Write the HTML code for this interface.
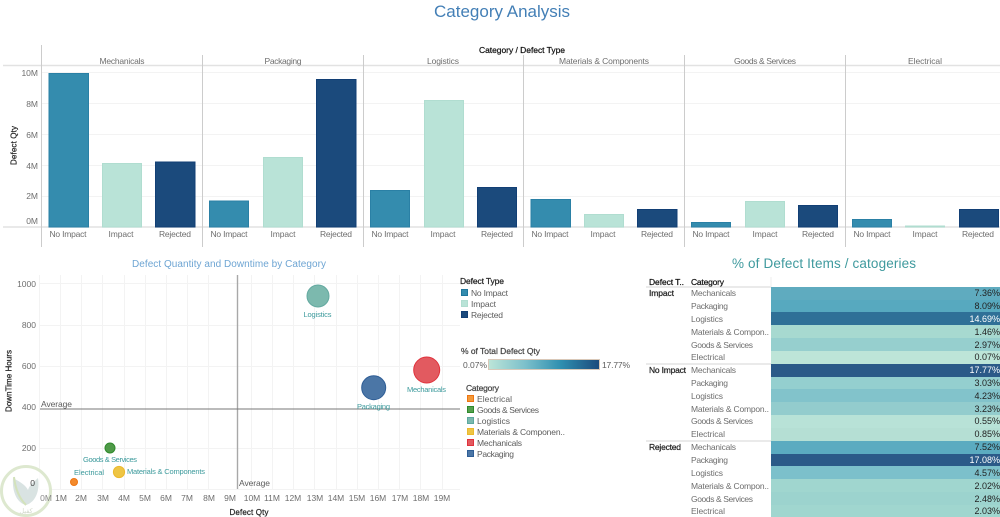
<!DOCTYPE html>
<html><head><meta charset="utf-8"><style>
html,body{margin:0;padding:0;background:#fff;width:1000px;height:517px;overflow:hidden}
svg{display:block;filter:blur(.35px)}
text{font-family:"Liberation Sans",sans-serif;font-size:8.5px;fill:#6e6e6e}
.b{fill:#222;font-weight:normal;stroke:#222;stroke-width:.22px;font-size:8.5px}
.m{text-anchor:middle}
.e{text-anchor:end}
.t{fill:#3c9a9c;font-size:7.5px;text-anchor:middle}
.l{fill:#5c5c5c}
.p{fill:#222;font-size:9px;text-anchor:end}
.g{stroke:#f3f3f3;stroke-width:1;fill:none}
.v{stroke:#ccc;stroke-width:1;fill:none}
</style></head><body>
<svg width="1000" height="517" viewBox="0 0 1000 517" xmlns="http://www.w3.org/2000/svg">
<rect width="1000" height="517" fill="#fff"/>
<text x="502" y="17" class="m" style="font-size:17px;fill:#437fb6" textLength="136">Category Analysis</text>

<!-- top chart grid -->
<path class="g" d="M42 72.5H1000M42 103.5H1000M42 134.5H1000M42 165.5H1000M42 196.5H1000"/>
<path d="M3 65.5H1000M3 227H1000" stroke="#e2e2e2" stroke-width="1.4" fill="none"/>
<path class="v" d="M41.5 45V247M202.5 55V247M363.5 55V247M523.5 55V247M684.5 55V247M845.5 55V247"/>

<text x="522" y="53" class="b m" style="fill:#111;stroke:#111" textLength="86">Category  /  Defect Type</text>
<g class="m">
<text x="122" y="64" class="m" textLength="45">Mechanicals</text>
<text x="283" y="64" class="m" textLength="37">Packaging</text>
<text x="443" y="64" class="m" textLength="32">Logistics</text>
<text x="604" y="64" class="m" textLength="90">Materials &amp; Components</text>
<text x="765" y="64" class="m" textLength="62">Goods &amp; Services</text>
<text x="925" y="64" class="m" textLength="34">Electrical</text>
</g>
<g>
<text x="38" y="76" class="e">10M</text>
<text x="38" y="107" class="e">8M</text>
<text x="38" y="138" class="e">6M</text>
<text x="38" y="169" class="e">4M</text>
<text x="38" y="199" class="e">2M</text>
<text x="38" y="224" class="e">0M</text>
</g>
<text transform="translate(16.5,145.5) rotate(-90)" class="b m" style="font-size:8px" textLength="39">Defect Qty</text>

<!-- bars -->
<g stroke-width="1">
<g fill="#348cae" stroke="#2a80a5">
<rect x="49" y="73.5" width="39.5" height="153.5"/>
<rect x="209.5" y="201" width="39" height="26"/>
<rect x="370.5" y="190.5" width="39" height="36.5"/>
<rect x="531" y="199.5" width="39.5" height="27.5"/>
<rect x="691.5" y="222.5" width="39" height="4.5"/>
<rect x="852.5" y="219.5" width="39" height="7.5"/>
</g>
<g fill="#b9e3d7" stroke="#b0ddd0">
<rect x="102.5" y="163.5" width="39" height="63.5"/>
<rect x="263.5" y="157.5" width="39" height="69.5"/>
<rect x="424.5" y="100.5" width="39" height="126.5"/>
<rect x="584.5" y="214.5" width="39" height="12.5"/>
<rect x="745.5" y="201.5" width="39" height="25.5"/>
<rect x="905.5" y="226" width="39" height="1"/>
</g>
<g fill="#1b4a7c" stroke="#123f75">
<rect x="155.5" y="162" width="39.5" height="65"/>
<rect x="316.5" y="79.5" width="39.5" height="147.5"/>
<rect x="477.5" y="187.5" width="39" height="39.5"/>
<rect x="637.5" y="209.5" width="39.5" height="17.5"/>
<rect x="798.5" y="205.5" width="39" height="21.5"/>
<rect x="959.5" y="209.5" width="39" height="17.5"/>
</g>
</g>
<g>
<text x="68" y="237" class="m" textLength="37">No Impact</text><text x="121" y="237" class="m" textLength="25">Impact</text><text x="175" y="237" class="m" textLength="32">Rejected</text>
<text x="229" y="237" class="m" textLength="37">No Impact</text><text x="283" y="237" class="m" textLength="25">Impact</text><text x="336" y="237" class="m" textLength="32">Rejected</text>
<text x="390" y="237" class="m" textLength="37">No Impact</text><text x="443" y="237" class="m" textLength="25">Impact</text><text x="497" y="237" class="m" textLength="32">Rejected</text>
<text x="550" y="237" class="m" textLength="37">No Impact</text><text x="603" y="237" class="m" textLength="25">Impact</text><text x="657" y="237" class="m" textLength="32">Rejected</text>
<text x="711" y="237" class="m" textLength="37">No Impact</text><text x="765" y="237" class="m" textLength="25">Impact</text><text x="818" y="237" class="m" textLength="32">Rejected</text>
<text x="872" y="237" class="m" textLength="37">No Impact</text><text x="925" y="237" class="m" textLength="25">Impact</text><text x="978" y="237" class="m" textLength="32">Rejected</text>
</g>

<!-- scatter -->
<text x="229" y="267" class="m" style="font-size:10px;fill:#6ea5d3" textLength="194">Defect Quantity and Downtime  by Category</text>
<path class="g" d="M39.5 275V490M60.5 275V490M81.5 275V490M102.5 275V490M124.5 275V490M145.5 275V490M166.5 275V490M187.5 275V490M208.5 275V490M251.5 275V490M272.5 275V490M293.5 275V490M314.5 275V490M336.5 275V490M357.5 275V490M378.5 275V490M399.5 275V490M420.5 275V490M442.5 275V490M40 283.5H460M40 325.5H460M40 366.5H460M40 448.5H460M40 489.5H460"/>
<path d="M237.5 275V489" stroke="#a8a8a8" stroke-width="1.4"/>
<path d="M40 409H460" stroke="#777" stroke-width="1"/>
<text x="41" y="407" class="l" textLength="31">Average</text>
<text x="239" y="486" class="l" textLength="31">Average</text>
<g>
<text x="36" y="287" class="e">1000</text>
<text x="36" y="328" class="e">800</text>
<text x="36" y="369" class="e">600</text>
<text x="36" y="410" class="e">400</text>
<text x="36" y="451" class="e">200</text>
</g>
<g>
<text x="61" y="501" class="m">1M</text><text x="81" y="501" class="m">2M</text><text x="103" y="501" class="m">3M</text><text x="124" y="501" class="m">4M</text><text x="145" y="501" class="m">5M</text><text x="166" y="501" class="m">6M</text><text x="187" y="501" class="m">7M</text><text x="209" y="501" class="m">8M</text><text x="230" y="501" class="m">9M</text><text x="252" y="501" class="m">10M</text><text x="272" y="501" class="m">11M</text><text x="293" y="501" class="m">12M</text><text x="315" y="501" class="m">13M</text><text x="336" y="501" class="m">14M</text><text x="357" y="501" class="m">15M</text><text x="378" y="501" class="m">16M</text><text x="400" y="501" class="m">17M</text><text x="421" y="501" class="m">18M</text><text x="442" y="501" class="m">19M</text>
</g>
<text x="249" y="515" class="b m" style="font-size:8px" textLength="39">Defect Qty</text>
<text transform="translate(11.5,381) rotate(-90)" class="b m" style="font-size:8px" textLength="62">DownTime Hours</text>

<circle cx="318" cy="296" r="11" fill="#7cb9ae" stroke="#63a9a0"/>
<circle cx="373.7" cy="387.7" r="12" fill="#4b76a6" stroke="#2f5e96"/>
<circle cx="426.7" cy="370" r="13" fill="#e25a60" stroke="#e0323c"/>
<circle cx="110" cy="448" r="5" fill="#4f9a48" stroke="#2f8a2c"/>
<circle cx="119" cy="472" r="5.6" fill="#eec544" stroke="#ecb92d"/>
<circle cx="74" cy="482" r="3.5" fill="#f38a2c" stroke="#ee7512"/>
<text x="317.5" y="317" class="t" textLength="28">Logistics</text>
<text x="373.5" y="409" class="t" textLength="33">Packaging</text>
<text x="426.5" y="392" class="t" textLength="39">Mechanicals</text>
<text x="110" y="462" class="t" textLength="54">Goods &amp; Services</text>
<text x="89" y="475" class="t" textLength="30">Electrical</text>
<text x="166" y="474" class="t" textLength="78">Materials &amp; Components</text>

<!-- legends -->
<text x="460" y="284" class="b" textLength="44">Defect Type</text>
<rect x="461.5" y="289.5" width="6" height="6" fill="#348cae" stroke="#1f769c"/><text x="471" y="296" class="l" textLength="37">No Impact</text>
<rect x="461.5" y="300.5" width="6" height="6" fill="#b9e3d7" stroke="#b0ddd0"/><text x="471" y="307" class="l" textLength="25">Impact</text>
<rect x="461.5" y="311.5" width="6" height="6" fill="#1b4a7c" stroke="#123f75"/><text x="471" y="318" class="l" textLength="32">Rejected</text>

<defs><linearGradient id="gr"><stop offset="0" stop-color="#bde5d8"/><stop offset=".33" stop-color="#7cc0cb"/><stop offset=".65" stop-color="#2f8fb0"/><stop offset="1" stop-color="#1b4a7c"/></linearGradient></defs>
<text x="461" y="354" class="b" style="fill:#444;stroke:#444" textLength="79">% of Total Defect Qty</text>
<rect x="488.5" y="359.5" width="111" height="10" fill="url(#gr)" stroke="#d9c8b8"/>
<text x="463" y="368" class="l" textLength="24">0.07%</text>
<text x="602" y="368" class="l" textLength="28">17.77%</text>

<text x="466" y="391" class="b" style="fill:#444;stroke:#444" textLength="33">Category</text>
<rect x="467.5" y="395.5" width="6" height="6" fill="#f39a3a" stroke="#ee7512"/><text x="477" y="402" class="l" textLength="35">Electrical</text>
<rect x="467.5" y="406.5" width="6" height="6" fill="#55a04e" stroke="#2f8a2c"/><text x="477" y="413" class="l" textLength="62">Goods &amp; Services</text>
<rect x="467.5" y="417.5" width="6" height="6" fill="#7cb9ae" stroke="#5ca89f"/><text x="477" y="424" class="l" textLength="33">Logistics</text>
<rect x="467.5" y="428.5" width="6" height="6" fill="#eec544" stroke="#ecb92d"/><text x="477" y="435" class="l" textLength="88">Materials &amp; Componen..</text>
<rect x="467.5" y="439.5" width="6" height="6" fill="#e25a60" stroke="#e0323c"/><text x="477" y="446" class="l" textLength="45">Mechanicals</text>
<rect x="467.5" y="450.5" width="6" height="6" fill="#4b76a6" stroke="#2f5e96"/><text x="477" y="457" class="l" textLength="37">Packaging</text>

<!-- table -->
<text x="824" y="268" class="m" style="font-size:13.5px;fill:#3f9a9e" textLength="184">% of Defect Items / catogeries</text>
<text x="649" y="285" class="b" style="fill:#111;stroke:#111" textLength="35">Defect T..</text>
<text x="691" y="285" class="b" style="fill:#111;stroke:#111" textLength="33">Category</text>
<path d="M646 287H771M646 364H771M646 441H771" stroke="#d4d4d4" stroke-width="1"/>
<path d="M771 277V287" stroke="#eee" stroke-width="1"/>
<text x="649" y="296" class="b" textLength="25">Impact</text>
<text x="649" y="373" class="b" textLength="37">No Impact</text>
<text x="649" y="450" class="b" textLength="32">Rejected</text>

<g>
<rect x="771" y="287" width="229" height="13" fill="#5fabbf"/>
<rect x="771" y="300" width="229" height="12" fill="#57a9bf"/>
<rect x="771" y="312" width="229" height="13" fill="#2f7097"/>
<rect x="771" y="325" width="229" height="13" fill="#a7d9d0"/>
<rect x="771" y="338" width="229" height="13" fill="#96cfce"/>
<rect x="771" y="351" width="229" height="13" fill="#bde5d8"/>
<rect x="771" y="364" width="229" height="13" fill="#2b5a88"/>
<rect x="771" y="377" width="229" height="12" fill="#94cfcf"/>
<rect x="771" y="389" width="229" height="13" fill="#82c3cb"/>
<rect x="771" y="402" width="229" height="13" fill="#93cccd"/>
<rect x="771" y="415" width="229" height="13" fill="#b8e2d7"/>
<rect x="771" y="428" width="229" height="13" fill="#b5dfd4"/>
<rect x="771" y="441" width="229" height="13" fill="#5babc0"/>
<rect x="771" y="454" width="229" height="12" fill="#2b5a88"/>
<rect x="771" y="466" width="229" height="13" fill="#7cc0cb"/>
<rect x="771" y="479" width="229" height="13" fill="#a0d6cf"/>
<rect x="771" y="492" width="229" height="13" fill="#9cd3ce"/>
<rect x="771" y="505" width="229" height="12" fill="#a0d6cf"/>
</g>
<g>
<text x="691" y="296" textLength="45">Mechanicals</text><text x="691" y="309" textLength="37">Packaging</text><text x="691" y="322" textLength="32">Logistics</text><text x="691" y="335" textLength="78">Materials &amp; Compon..</text><text x="691" y="348" textLength="62">Goods &amp; Services</text><text x="691" y="360" textLength="34">Electrical</text>
<text x="691" y="373" textLength="45">Mechanicals</text><text x="691" y="386" textLength="37">Packaging</text><text x="691" y="399" textLength="32">Logistics</text><text x="691" y="412" textLength="78">Materials &amp; Compon..</text><text x="691" y="424" textLength="62">Goods &amp; Services</text><text x="691" y="437" textLength="34">Electrical</text>
<text x="691" y="450" textLength="45">Mechanicals</text><text x="691" y="463" textLength="37">Packaging</text><text x="691" y="476" textLength="32">Logistics</text><text x="691" y="489" textLength="78">Materials &amp; Compon..</text><text x="691" y="502" textLength="62">Goods &amp; Services</text><text x="691" y="514" textLength="34">Electrical</text>
</g>
<g>
<text x="1000" y="296" class="p">7.36%</text><text x="1000" y="309" class="p">8.09%</text><text x="1000" y="322" class="p" style="fill:#fff">14.69%</text><text x="1000" y="335" class="p">1.46%</text><text x="1000" y="348" class="p">2.97%</text><text x="1000" y="360" class="p">0.07%</text>
<text x="1000" y="373" class="p" style="fill:#fff">17.77%</text><text x="1000" y="386" class="p">3.03%</text><text x="1000" y="399" class="p">4.23%</text><text x="1000" y="412" class="p">3.23%</text><text x="1000" y="424" class="p">0.55%</text><text x="1000" y="437" class="p">0.85%</text>
<text x="1000" y="450" class="p">7.52%</text><text x="1000" y="463" class="p" style="fill:#fff">17.08%</text><text x="1000" y="476" class="p">4.57%</text><text x="1000" y="489" class="p">2.02%</text><text x="1000" y="502" class="p">2.48%</text><text x="1000" y="514" class="p">2.03%</text>
</g>

<!-- watermark logo -->
<g>
<circle cx="26" cy="491" r="24.5" fill="#fff" fill-opacity=".7" stroke="#dde8cf" stroke-width="3"/>
<path d="M13 478C12 492 17 503 26 505C36 502 40 490 38 478C34 482 30 484 28 490C25 484 18 481 13 478Z" fill="#d9e3e2"/>
<path d="M14 477C15 486 18 497 26 505" stroke="#d3e2bb" stroke-width="2" fill="none"/>
<text x="26" y="513" class="m" style="font-family:'DejaVu Sans',sans-serif;font-size:6.5px;fill:#d3d9cc">كفيل</text>
</g>
<text x="35" y="486" class="e" style="fill:#444">0</text>
<text x="46" y="501" class="m" style="fill:#888">0M</text>
</svg>
</body></html>
